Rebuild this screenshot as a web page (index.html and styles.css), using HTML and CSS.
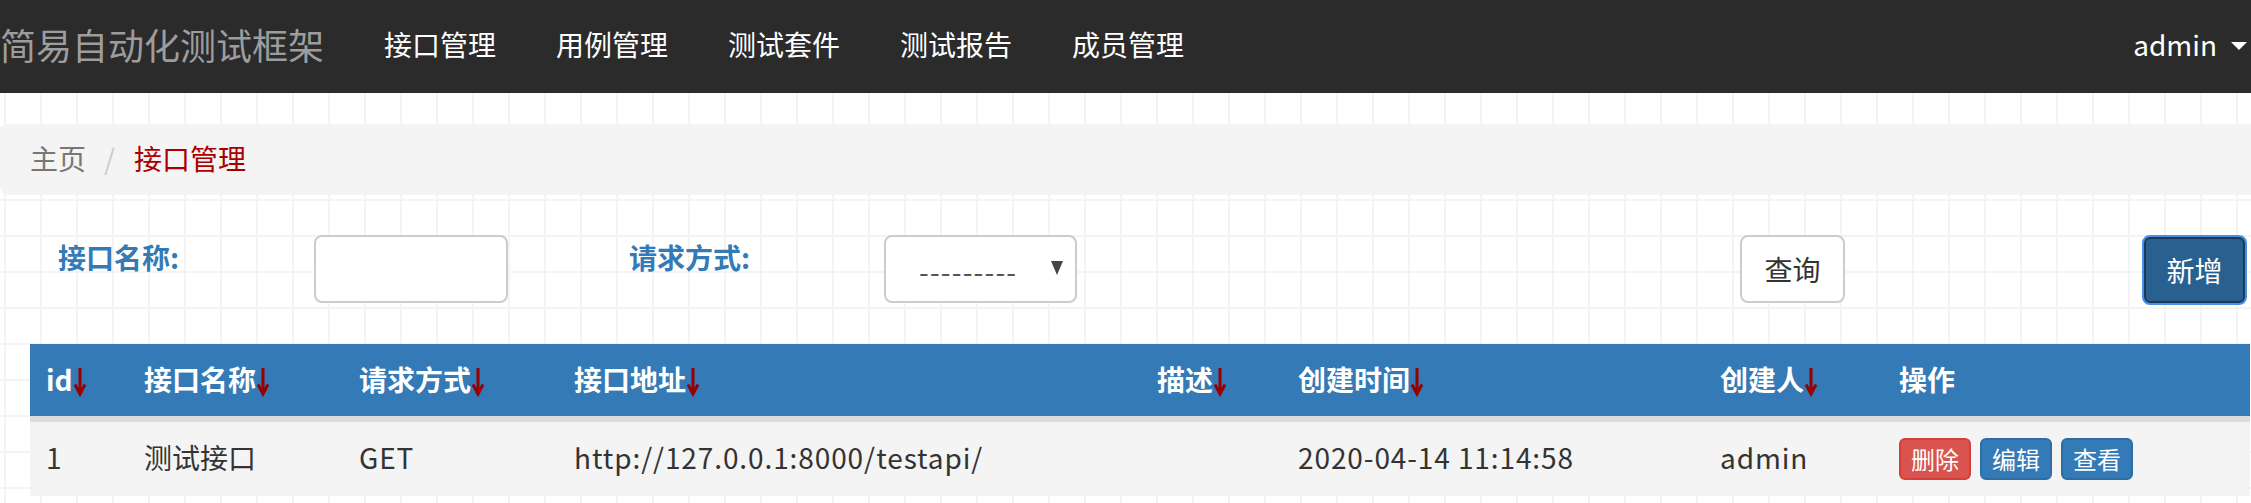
FILE: index.html
```html
<!DOCTYPE html>
<html lang="zh-CN">
<head>
<meta charset="utf-8">
<title>接口管理</title>
<link rel="stylesheet" href="styles.css">
</head>
<body>
<nav class="navbar">
  <a class="brand">简易自动化测试框架</a>
  <ul class="nav">
    <li><a>接口管理</a></li>
    <li><a>用例管理</a></li>
    <li><a>测试套件</a></li>
    <li><a>测试报告</a></li>
    <li><a>成员管理</a></li>
  </ul>
  <div class="user">admin<span class="caret"></span></div>
</nav>
<main class="page">
  <ol class="breadcrumb">
    <li class="crumb">主页</li>
    <li class="sep">/</li>
    <li class="crumb active">接口管理</li>
  </ol>
  <form class="search">
    <label class="field-label">接口名称:</label>
    <input class="control text-input" type="text">
    <label class="field-label">请求方式:</label>
    <div class="control select"><span class="select-text">---------</span><span class="select-arrow"></span></div>
    <button type="button" class="btn btn-default">查询</button>
    <button type="button" class="btn btn-add">新增</button>
  </form>
  <table class="data-table">
    <thead>
      <tr>
        <th class="c-id">id<svg class="sort" viewBox="0 0 14 32" width="14" height="32"><path d="M7 3v25M2 19.5 7 29l5-9.5"/></svg></th>
        <th class="c-name">接口名称<svg class="sort" viewBox="0 0 14 32" width="14" height="32"><path d="M7 3v25M2 19.5 7 29l5-9.5"/></svg></th>
        <th class="c-method">请求方式<svg class="sort" viewBox="0 0 14 32" width="14" height="32"><path d="M7 3v25M2 19.5 7 29l5-9.5"/></svg></th>
        <th class="c-url">接口地址<svg class="sort" viewBox="0 0 14 32" width="14" height="32"><path d="M7 3v25M2 19.5 7 29l5-9.5"/></svg></th>
        <th class="c-desc">描述<svg class="sort" viewBox="0 0 14 32" width="14" height="32"><path d="M7 3v25M2 19.5 7 29l5-9.5"/></svg></th>
        <th class="c-time">创建时间<svg class="sort" viewBox="0 0 14 32" width="14" height="32"><path d="M7 3v25M2 19.5 7 29l5-9.5"/></svg></th>
        <th class="c-user">创建人<svg class="sort" viewBox="0 0 14 32" width="14" height="32"><path d="M7 3v25M2 19.5 7 29l5-9.5"/></svg></th>
        <th class="c-ops">操作</th>
      </tr>
    </thead>
    <tbody>
      <tr>
        <td class="latin">1</td>
        <td>测试接口</td>
        <td class="latin">GET</td>
        <td class="latin">http://127.0.0.1:8000/testapi/</td>
        <td></td>
        <td class="latin">2020-04-14 11:14:58</td>
        <td class="latin">admin</td>
        <td class="ops"><div class="acts"><a class="bx bx-danger">删除</a><a class="bx bx-primary">编辑</a><a class="bx bx-primary">查看</a></div></td>
      </tr>
    </tbody>
  </table>
</main>
</body>
</html>
```

FILE: styles.css
```css
* { box-sizing: border-box; }
html, body { margin: 0; padding: 0; }
body {
  font-family: "Noto Sans CJK SC", sans-serif;
  font-size: 28px;
  line-height: 40px;
  color: #333;
  background-color: #fff;
  background-image:
    linear-gradient(to bottom, #f4f4f4 2px, transparent 2px),
    linear-gradient(to right, #f4f4f4 2px, transparent 2px);
  background-size: 36px 36px;
  background-position: 4px 19px;
  height: 503px;
  overflow: hidden;
}

/* navbar */
.navbar {
  display: flex;
  align-items: center;
  height: 93px;
  padding-bottom: 5px;
  background: #2b2b2b;
}
.brand {
  font-size: 36px;
  line-height: 40px;
  color: #9d9d9d;
  padding-right: 30px;
}
.nav {
  display: flex;
  list-style: none;
  margin: 0;
  padding: 0;
}
.nav a {
  display: block;
  padding: 0 30px;
  color: #fff;
}
.user {
  margin-left: auto;
  display: flex;
  align-items: center;
  color: #fff;
  padding-right: 4px;
}
.caret {
  width: 0;
  height: 0;
  border-top: 8px solid #fff;
  border-left: 8px solid transparent;
  border-right: 8px solid transparent;
  margin-left: 14px;
  margin-top: 3px;
}

/* breadcrumb */
.breadcrumb {
  display: flex;
  list-style: none;
  margin: 31px -20px 0 0;
  padding: 14px 30px 17px;
  background: #f4f4f4;
  border-radius: 8px;
}
.crumb { color: #777; }
.crumb.active { color: #a80000; }
.sep { color: #ccc; padding: 0 19px 0 18px; }

/* search form */
.search {
  display: grid;
  grid-template-columns: 256px 315px 255px 856px 402px 105px;
  align-items: start;
  margin: 40px 0 0 58px;
}
.field-label {
  font-weight: bold;
  color: #337ab7;
  padding-top: 2px;
}
.control {
  height: 68px;
  border: 2px solid #ccc;
  border-radius: 8px;
  background: #fff;
}
.text-input {
  width: 194px;
  margin: 0;
  font: inherit;
}
.select {
  width: 193px;
  display: flex;
  align-items: center;
  justify-content: space-between;
  padding: 0 12px 0 33px;
  color: #555;
}
.select-text { letter-spacing: 1.2px; padding-top: 4px; }
.select-arrow {
  width: 0;
  height: 0;
  border-top: 14px solid #444;
  border-left: 6px solid transparent;
  border-right: 6px solid transparent;
  margin-top: -2px;
}
.btn {
  width: 105px;
  height: 68px;
  margin: 0;
  padding: 0;
  font: inherit;
  border-radius: 8px;
  cursor: pointer;
}
.btn-default {
  background: #fff;
  border: 2px solid #ccc;
  color: #333;
}
.btn-add {
  height: 70px;
  background: #286090;
  color: #fff;
  border: 2px solid #4a8fe6;
  box-shadow: inset 0 0 0 2px #1c3a57;
}

/* table */
.data-table {
  border-collapse: separate;
  border-spacing: 0;
  table-layout: fixed;
  width: 2220px;
  margin: 39px 0 0 30px;
}
.data-table th {
  background: #337ab7;
  color: #fff;
  font-weight: bold;
  text-align: left;
  padding: 15px 16px 17px;
  line-height: 40px;
  border-bottom: 4px solid #dcdcdc;
  white-space: nowrap;
}
.data-table td {
  background: #f4f4f4;
  padding: 14px 16px 18px;
  line-height: 40px;
  border-top: 2px solid #dcdcdc;
  white-space: nowrap;
}
.data-table td.latin { letter-spacing: 0.9px; }
.data-table td.ops { padding: 16px; }
.sort {
  vertical-align: -6px;
  fill: none;
  stroke: #980000;
  stroke-width: 3;
}
.c-id { width: 98px; }
.c-name { width: 215px; }
.c-method { width: 215px; }
.c-url { width: 583px; }
.c-desc { width: 141px; }
.c-time { width: 422px; }
.c-user { width: 179px; }
.c-ops { width: 367px; }

.acts { display: flex; gap: 9px; }
.bx {
  display: block;
  font-size: 24px;
  line-height: 36px;
  padding: 1px 10px;
  border: 2px solid;
  border-radius: 6px;
  color: #fff;
}
.bx-danger { background: #d9534f; border-color: #d43f3a; }
.bx-primary { background: #337ab7; border-color: #2e6da4; }
```
